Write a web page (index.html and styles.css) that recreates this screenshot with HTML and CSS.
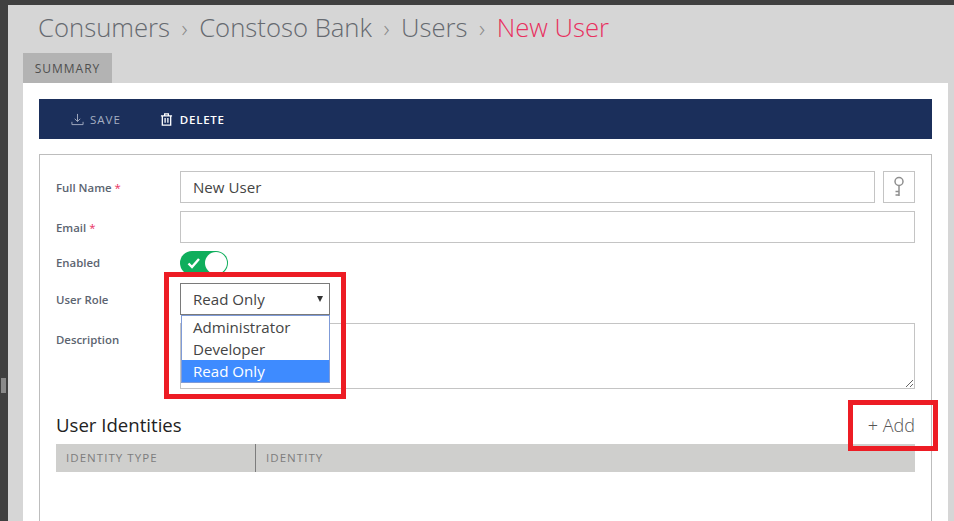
FILE: index.html
```html
<!DOCTYPE html>
<html lang="en">
<head>
<meta charset="utf-8">
<title>New User</title>
<link rel="stylesheet" href="styles.css">
</head>
<body>
<div class="rail"><span class="rail-thumb"></span></div>
<main class="page">
  <nav class="crumbs">
    <span>Consumers</span><span class="sep">›</span>
    <span>Constoso Bank</span><span class="sep">›</span>
    <span>Users</span><span class="sep">›</span>
    <span class="current">New User</span>
  </nav>
  <div class="tabs"><span class="tab">SUMMARY</span></div>
  <section class="panel">
    <div class="toolbar">
      <button class="tool tool-muted" type="button">
        <svg class="tool-icon" viewBox="0 0 14 14" fill="none" stroke="currentColor" stroke-width="1"><path d="M7 1v8M4 6.2L7 9.2l3-3M1 9.5v3h12v-3"/></svg>
        SAVE
      </button>
      <button class="tool" type="button">
        <svg class="tool-icon" viewBox="0 0 14 14" fill="none" stroke="currentColor" stroke-width="1.4"><path d="M1 3h12M5 3V1h4v2M2.5 3v10h9V3M5.5 5.5v5M8.5 5.5v5"/></svg>
        DELETE
      </button>
    </div>
    <form class="form">
      <div class="row">
        <label class="label">Full Name <i>*</i></label>
        <input class="field grow" type="text" value="New User">
        <button class="key" type="button" aria-label="Key">
          <svg viewBox="0 0 12 22" width="12" height="22" fill="none" stroke="#8f8f8f" stroke-width="1.5"><circle cx="6" cy="5.5" r="4"/><path d="M6 9.5V20M2.5 15.5H6M2.5 19H6"/></svg>
        </button>
      </div>
      <div class="row">
        <label class="label">Email <i>*</i></label>
        <input class="field grow" type="text">
      </div>
      <div class="row row-toggle">
        <label class="label label-toggle">Enabled</label>
        <span class="toggle">
          <svg viewBox="0 0 14 12" width="14" height="12" fill="none" stroke="#fff" stroke-width="2.4"><path d="M1.5 6.5l3.5 3.5 7-8"/></svg>
          <span class="knob"></span>
        </span>
      </div>
      <div class="row">
        <label class="label">User Role</label>
        <div class="select-wrap">
          <div class="select"><span>Read Only</span><span class="arrow"></span></div>
          <ul class="options">
            <li>Administrator</li>
            <li>Developer</li>
            <li class="selected">Read Only</li>
          </ul>
          <span class="callout callout-role"></span>
        </div>
      </div>
      <div class="row row-desc">
        <label class="label label-desc">Description</label>
        <textarea class="field grow desc"></textarea>
      </div>
      <div class="identities-head">
        <h2>User Identities</h2>
        <span class="add">+ Add<span class="callout callout-add"></span></span>
      </div>
      <div class="thead">
        <span class="th th-type">IDENTITY TYPE</span>
        <span class="th">IDENTITY</span>
      </div>
      <div class="tbody"></div>
    </form>
  </section>
</main>
</body>
</html>
```

FILE: styles.css
```css
* { box-sizing: border-box; }
html, body { margin: 0; height: 521px; overflow: hidden; }
body {
  display: flex;
  background: #404040;
  font-family: "Open Sans", "Noto Sans", sans-serif;
  color: #444;
}
.rail { width: 8px; position: relative; flex: none; }
.rail-thumb { position: absolute; left: 1px; top: 378px; width: 5px; height: 15px; background: #8a8a8a; }
.page {
  flex: 1;
  margin-top: 5px;
  padding-left: 15px;
  background: #d6d6d6;
  min-width: 0;
  height: 516px;
  overflow: hidden;
}
.crumbs {
  height: 48px;
  padding: 0 0 4px 15px;
  display: flex;
  align-items: center;
  gap: 11.5px;
  font-size: 25.7px;
  font-weight: 300;
  color: #666a70;
  white-space: nowrap;
}
.crumbs .sep { font-size: 24px; color: #8b8b8b; }
.crumbs .current { color: #e8305f; }
.tabs { height: 30px; display: flex; }
.tab {
  width: 89px;
  background: #b3b3b3;
  font-size: 12px;
  letter-spacing: 1px;
  color: #4f4f4f;
  display: flex;
  align-items: center;
  justify-content: center;
}
.panel {
  width: 925px;
  height: 438px;
  background: #fff;
  padding: 16px 16px 0;
  overflow: hidden;
}
.toolbar {
  height: 40px;
  background: #1b2f5b;
  display: flex;
  align-items: center;
  padding-left: 32px;
  gap: 39px;
}
.tool {
  border: 0;
  background: none;
  padding: 0;
  display: flex;
  align-items: center;
  gap: 7px;
  color: #fff;
  font: 600 11.5px "Open Sans", sans-serif;
  letter-spacing: 0.75px;
}
.tool-muted { color: #a6afc2; font-weight: 400; letter-spacing: 1px; gap: 6px; }
.tool-icon { width: 13px; height: 13px; }
.form {
  margin-top: 15px;
  height: 400px;
  border: 1px solid #bdbdbd;
  padding: 16px 16px 0;
}
.row { display: flex; align-items: center; gap: 8px; margin-bottom: 8px; }
.label {
  width: 116px;
  flex: none;
  font-size: 11.4px;
  font-weight: 600;
  color: #5c6470;
}
.label i { color: #e8305f; font-style: normal; font-weight: 400; }
.label-toggle { margin-bottom: 2px; }
.field {
  height: 32px;
  border: 1px solid #c4c4c4;
  padding: 0 12px;
  font: 15.1px "Open Sans", sans-serif;
  color: #444;
  background: #fff;
  outline: none;
}
.grow { flex: 1; min-width: 0; }
.key {
  width: 32px;
  height: 32px;
  flex: none;
  padding: 0;
  border: 1px solid #c4c4c4;
  background: #fff;
  display: flex;
  align-items: center;
  justify-content: center;
}
.row-toggle { height: 24px; }
.toggle {
  width: 48px;
  height: 24px;
  border-radius: 12px;
  background: #0fae5c;
  position: relative;
  display: flex;
  align-items: center;
  padding-left: 7px;
}
.knob {
  position: absolute;
  right: 1px;
  top: 1px;
  width: 22px;
  height: 22px;
  border-radius: 50%;
  background: #fff;
}
.select-wrap { position: relative; width: 150px; }
.select {
  height: 32px;
  border: 1px solid #7a7a7a;
  padding: 0 6px 0 12px;
  font-size: 15.1px;
  color: #444;
  background: #fff;
  display: flex;
  align-items: center;
  justify-content: space-between;
}
.arrow {
  width: 0;
  height: 0;
  border-left: 3.5px solid transparent;
  border-right: 3.5px solid transparent;
  border-top: 6px solid #333;
}
.options {
  position: absolute;
  z-index: 2;
  left: 1px;
  top: 32px;
  width: 149px;
  height: 68px;
  margin: 0;
  padding: 0;
  list-style: none;
  background: #fff;
  border: 1px solid #7f9bd8;
  font-size: 15.1px;
  line-height: 23px;
  color: #444;
}
.options li { height: 22px; padding-left: 11px; }
.options .selected { background: #3e8bff; color: #fff; }
.callout {
  position: absolute;
  z-index: 3;
  border: 5px solid #ed1c24;
  pointer-events: none;
}
.callout-role { left: -16px; top: -11px; width: 182px; height: 127px; }
.row-desc { align-items: flex-start; margin-bottom: 0; }
.label-desc { padding-top: 9px; }
.desc { height: 66px; display: block; resize: both; }
.identities-head {
  height: 55px;
  display: flex;
  align-items: flex-end;
  justify-content: space-between;
  padding-bottom: 7px;
}
.identities-head h2 {
  margin: 0;
  font-size: 18.6px;
  font-weight: 400;
  color: #222;
}
.add {
  position: relative;
  font-size: 18px;
  font-weight: 300;
  color: #555;
  line-height: 24px;
}
.callout-add { left: -20px; top: -13px; width: 90px; height: 51px; }
.thead {
  height: 28px;
  background: #cfcfcd;
  display: flex;
  align-items: center;
  font-size: 11.5px;
  letter-spacing: 1.05px;
  color: #7d7d7d;
}
.th { padding-left: 10px; line-height: 28px; }
.th-type { width: 200px; border-right: 1px solid #7d7d7d; }
```
